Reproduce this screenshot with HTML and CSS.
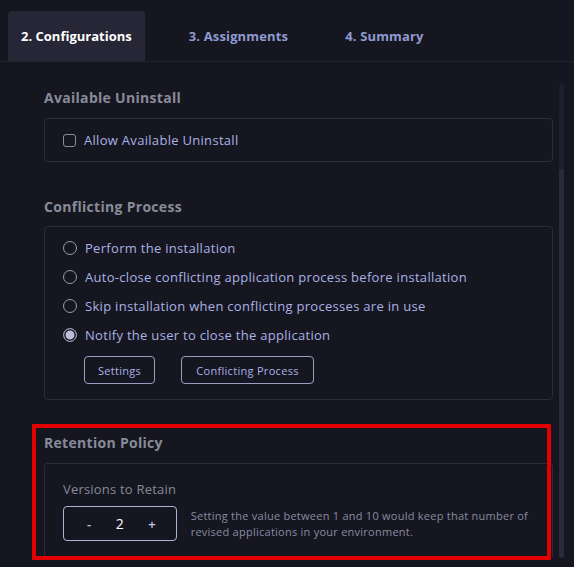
FILE: index.html
```html
<!DOCTYPE html>
<html>
<head>
<meta charset="utf-8">
<link rel="stylesheet" href="styles.css">
</head>
<body>
<div class="tabs">
  <div class="tab active">2. Configurations</div>
  <div class="tab">3. Assignments</div>
  <div class="tab">4. Summary</div>
</div>
<div class="main">
  <div class="content">
    <h2 class="heading">Available Uninstall</h2>
    <div class="box box-check">
      <label class="row"><span class="checkbox"></span>Allow Available Uninstall</label>
    </div>

    <h2 class="heading h-gap">Conflicting Process</h2>
    <div class="box box-radio">
      <div class="row"><span class="radio"></span>Perform the installation</div>
      <div class="row"><span class="radio"></span>Auto-close conflicting application process before installation</div>
      <div class="row"><span class="radio"></span>Skip installation when conflicting processes are in use</div>
      <div class="row"><span class="radio checked"></span>Notify the user to close the application</div>
      <div class="buttons">
        <button class="btn btn-settings">Settings</button>
        <button class="btn btn-proc">Conflicting Process</button>
      </div>
    </div>

    <h2 class="heading h-gap2">Retention Policy</h2>
    <div class="box box-ret">
      <div class="sub">Versions to Retain</div>
      <div class="ret-row">
        <div class="stepper"><span class="op">-</span><span class="val">2</span><span class="op">+</span></div>
        <p class="help">Setting the value between 1 and 10 would keep that number of revised applications in your environment.</p>
      </div>
    </div>
    <div class="highlight"></div>
  </div>
  <div class="scrollbar"><div class="thumb"></div></div>
</div>
</body>
</html>
```
FILE: styles.css
```css
* { box-sizing: border-box; }
html, body { margin: 0; height: 100%; }
body {
  background: #161620;
  font-family: "Open Sans", "Noto Sans", sans-serif;
  color: #a9b2e4;
  overflow: hidden;
}
.tabs {
  display: flex;
  gap: 31px;
  padding: 11px 0 0 8px;
  height: 62px;
  border-bottom: 1px solid #22222e;
}
.tab {
  height: 50px;
  padding: 0 13px;
  display: flex;
  align-items: center;
  font-size: 13px;
  font-weight: 700;
  color: #8f9ad0;
  letter-spacing: 0.15px;
}
.tab.active {
  background: #272636;
  color: #ffffff;
  border-radius: 4px 4px 0 0;
  letter-spacing: 0;
}
.main {
  display: flex;
  height: 505px;
  overflow: hidden;
}
.content {
  position: relative;
  width: 509px;
  margin-left: 44px;
  padding-top: 26px;
}
.heading {
  margin: 0 0 10px;
  font-size: 14px;
  line-height: 20px;
  font-weight: 700;
  color: #888b99;
  letter-spacing: 0.3px;
}
.h-gap { margin-top: 35px; margin-bottom: 9px; }
.h-gap2 { margin-top: 33px; }
.box {
  border: 1px solid #2b2b3b;
  border-radius: 4px;
}
.box-check { height: 44px; padding: 0 18px; display: flex; align-items: center; }
.row {
  display: flex;
  align-items: center;
  gap: 8px;
  font-size: 13px;
  height: 29px;
  white-space: nowrap;
  letter-spacing: 0.3px;
}
.box-radio { padding: 6px 18px 15px; }
.checkbox {
  width: 13px; height: 13px;
  border: 1.5px solid #8c8c9c;
  border-radius: 3px;
  margin-top: 1px;
}
.radio {
  width: 14px; height: 14px;
  border: 1.5px solid #9a9aaa;
  border-radius: 50%;
  flex: none;
}
.radio.checked {
  background: #bcbcdc;
  box-shadow: inset 0 0 0 1.5px #161620;
}
.buttons { display: flex; gap: 26px; margin: 7px 0 0 21px; }
.btn {
  height: 28px;
  background: transparent;
  border: 1px solid #9a9ec4;
  border-radius: 4px;
  color: #a9b2e4;
  font-family: inherit;
  font-size: 11px;
  letter-spacing: 0.3px;
  padding: 0;
}
.btn-settings { width: 71px; }
.btn-proc { width: 133px; }
.box-ret {
  height: 94px;
  padding: 16px 18px 0;
  border-bottom: none;
  border-radius: 4px 4px 0 0;
}
.sub { font-size: 13px; color: #878a98; line-height: 18px; letter-spacing: 0.2px; }
.ret-row { display: flex; align-items: center; gap: 14px; margin-top: 8px; }
.stepper {
  width: 115px; height: 35px;
  border: 1px solid #b0b3d0;
  border-radius: 4px;
  display: flex;
  align-items: center;
  justify-content: space-between;
  padding: 0 20px 0 23px;
  font-size: 13px;
}
.op { color: #c4c8ec; font-weight: 600; }
.val { color: #ffffff; font-size: 14px; }
.help {
  margin: 0;
  font-size: 11px;
  line-height: 16px;
  color: #878ba2;
  width: 350px;
  letter-spacing: 0.25px;
}
.highlight {
  position: absolute;
  left: -12px;
  top: 362px;
  width: 519px;
  height: 136px;
  border: 4px solid #e20000;
}
.scrollbar {
  margin: 22px 0 0 6px;
  width: 5px;
  height: 474px;
  background: #1f1f2b;
  border-radius: 3px;
  display: flex;
  flex-direction: column;
  justify-content: flex-end;
}
.thumb {
  height: 389px;
  background: #2a2a3a;
  border-radius: 3px;
}
```
